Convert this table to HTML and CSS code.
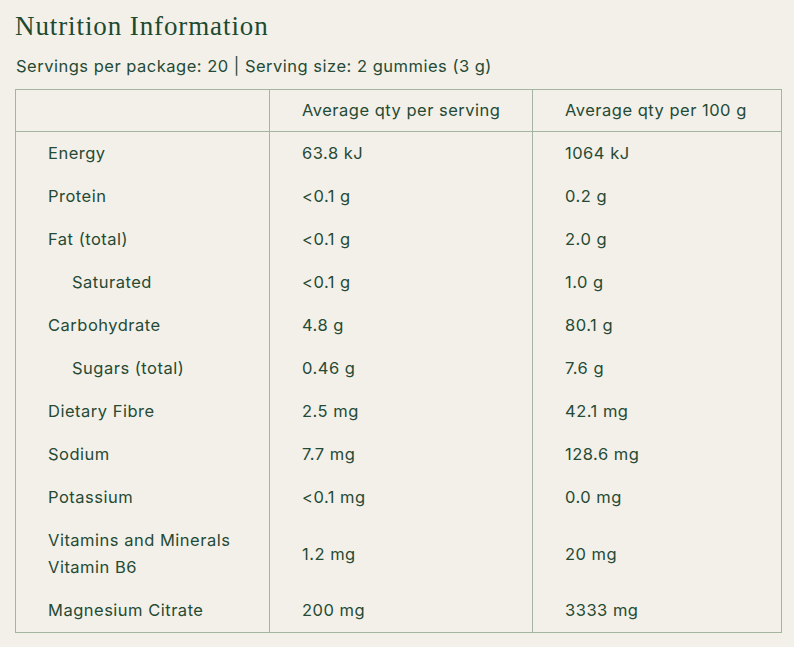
FILE: index.html
```html
<!DOCTYPE html>
<html>
<head>
<meta charset="utf-8">
<link rel="stylesheet" href="styles.css">
</head>
<body>
<div class="page">
  <h1 class="title">Nutrition Information</h1>
  <p class="meta">Servings per package: 20 | Serving size: 2 gummies (3 g)</p>
  <table class="nutri">
    <colgroup>
      <col class="c1"><col class="c2"><col class="c3">
    </colgroup>
    <thead>
      <tr><th></th><th>Average qty per serving</th><th>Average qty per 100 g</th></tr>
    </thead>
    <tbody>
      <tr><td>Energy</td><td>63.8 kJ</td><td>1064 kJ</td></tr>
      <tr><td>Protein</td><td>&lt;0.1 g</td><td>0.2 g</td></tr>
      <tr><td>Fat (total)</td><td>&lt;0.1 g</td><td>2.0 g</td></tr>
      <tr><td class="sub">Saturated</td><td>&lt;0.1 g</td><td>1.0 g</td></tr>
      <tr><td>Carbohydrate</td><td>4.8 g</td><td>80.1 g</td></tr>
      <tr><td class="sub">Sugars (total)</td><td>0.46 g</td><td>7.6 g</td></tr>
      <tr><td>Dietary Fibre</td><td>2.5 mg</td><td>42.1 mg</td></tr>
      <tr><td>Sodium</td><td>7.7 mg</td><td>128.6 mg</td></tr>
      <tr><td>Potassium</td><td>&lt;0.1 mg</td><td>0.0 mg</td></tr>
      <tr><td>Vitamins and Minerals<br>Vitamin B6</td><td>1.2 mg</td><td>20 mg</td></tr>
      <tr><td>Magnesium Citrate</td><td>200 mg</td><td>3333 mg</td></tr>
    </tbody>
  </table>
</div>
</body>
</html>
```

FILE: styles.css
```css
html, body {
  margin: 0;
  padding: 0;
  background: #f3f0e9;
}
.page {
  padding: 9px 15px 0 15px;
  color: #254a35;
  font-family: Inter, "Liberation Sans", Arial, sans-serif;
}
.title {
  margin: 0;
  font-family: "Liberation Serif", "Times New Roman", serif;
  font-weight: normal;
  font-size: 27px;
  line-height: 34px;
  color: #1c4a31;
  letter-spacing: 0.9px;
}
.meta {
  margin: 11px 0 0 1px;
  font-size: 16.5px;
  line-height: 24px;
  letter-spacing: 0.5px;
}
.nutri {
  margin-top: 11px;
  border-collapse: collapse;
  width: 766px;
  table-layout: fixed;
  font-size: 16.5px;
  letter-spacing: 0.5px;
}
.c1 { width: 254px; }
.c2 { width: 263px; }
.c3 { width: 249px; }
.nutri th, .nutri td {
  border-left: 1px solid #a3b5a0;
  border-right: 1px solid #a3b5a0;
  padding: 8px 10px 8px 32px;
  line-height: 27px;
  text-align: left;
  vertical-align: middle;
  font-weight: normal;
}
.nutri th {
  border-top: 1px solid #a3b5a0;
  border-bottom: 1px solid #a3b5a0;
  padding-top: 7px;
  padding-bottom: 7px;
}
.nutri tbody tr:last-child td {
  border-bottom: 1px solid #a3b5a0;
}
.nutri td.sub {
  padding-left: 56px;
}
```
